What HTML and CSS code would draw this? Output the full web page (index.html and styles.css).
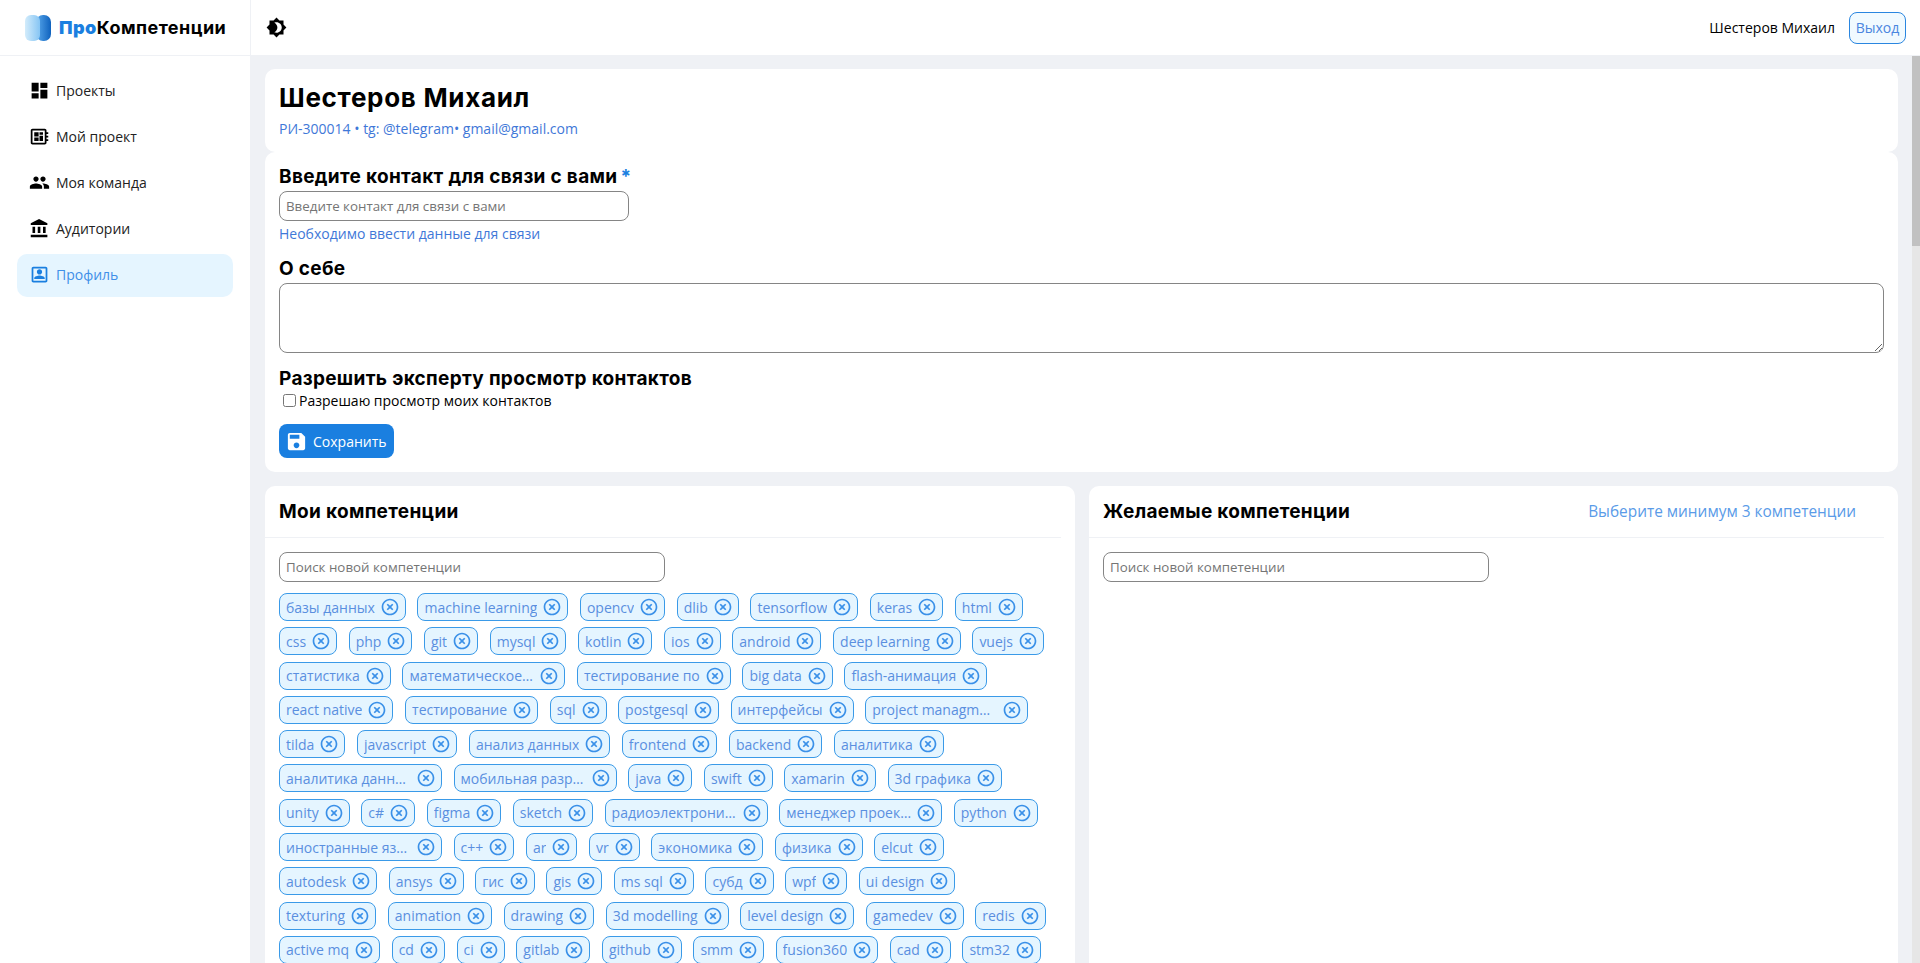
FILE: index.html
```html
<!DOCTYPE html>
<html lang="ru">
<head>
  <meta charset="UTF-8">
  <title>ПроКомпетенции</title>
  <link rel="stylesheet" href="styles.css">
</head>
<body>
  <svg class="sprite" width="0" height="0">
    <symbol id="i-off" viewBox="0 0 24 24"><path d="M14.59 8L12 10.59 9.41 8 8 9.41 10.59 12 8 14.59 9.41 16 12 13.41 14.59 16 16 14.59 13.41 12 16 9.41 14.59 8zM12 2C6.47 2 2 6.47 2 12s4.47 10 10 10 10-4.47 10-10S17.53 2 12 2zm0 18c-4.41 0-8-3.59-8-8s3.59-8 8-8 8 3.59 8 8-3.59 8-8 8z"/></symbol>
  </svg>

  <header class="topbar">
    <div class="brand">
      <svg class="brand-logo" viewBox="0 0 26 26">
        <defs>
          <linearGradient id="lg-a" x1="0" x2="1" y1="0" y2="0"><stop offset="0" stop-color="#d3ecfb"/><stop offset="1" stop-color="#86c5f4"/></linearGradient>
          <linearGradient id="lg-b" x1="0" x2="1" y1="0" y2="0"><stop offset="0" stop-color="#5aa9ec"/><stop offset="1" stop-color="#0f62be"/></linearGradient>
        </defs>
        <rect x="11" y="0" width="15" height="26" rx="7" fill="url(#lg-b)"/>
        <rect x="0" y="0" width="15" height="26" rx="6" fill="url(#lg-a)"/>
      </svg>
      <span class="brand-name"><b>Про</b>Компетенции</span>
    </div>
    <div class="topbar-main">
      <svg class="theme-icon" viewBox="0 0 24 24"><path d="M20 8.69V4h-4.69L12 .69 8.69 4H4v4.69L.69 12 4 15.31V20h4.69L12 23.31 15.31 20H20v-4.69L23.31 12 20 8.69zM12 18c-.89 0-1.74-.2-2.5-.55C11.56 16.5 13 14.42 13 12s-1.44-4.5-3.5-5.45C10.26 6.2 11.11 6 12 6c3.31 0 6 2.69 6 6s-2.69 6-6 6z"/></svg>
      <div class="user">
        <span>Шестеров Михаил</span>
        <button class="logout">Выход</button>
      </div>
    </div>
  </header>

  <div class="layout">
    <nav class="sidebar">
      <a class="nav-item"><svg viewBox="0 0 24 24"><path d="M3 13h8V3H3v10zm0 8h8v-6H3v6zm10 0h8V11h-8v10zm0-18v6h8V3h-8z"/></svg>Проекты</a>
      <a class="nav-item"><svg viewBox="0 0 24 24"><path d="M22 9V7h-2V5c0-1.1-.9-2-2-2H4c-1.1 0-2 .9-2 2v14c0 1.1.9 2 2 2h14c1.1 0 2-.9 2-2v-2h2v-2h-2v-2h2v-2h-2V9h2zm-4 10H4V5h14v14zM6 13h5v4H6zm6-6h4v3h-4zM6 7h5v5H6zm6 4h4v6h-4z"/></svg>Мой проект</a>
      <a class="nav-item"><svg viewBox="0 0 24 24"><path d="M16 11c1.66 0 2.99-1.34 2.99-3S17.66 5 16 5c-1.66 0-3 1.34-3 3s1.34 3 3 3zm-8 0c1.66 0 2.99-1.34 2.99-3S9.66 5 8 5C6.34 5 5 6.34 5 8s1.34 3 3 3zm0 2c-2.33 0-7 1.17-7 3.5V19h14v-2.5c0-2.33-4.67-3.5-7-3.5zm8 0c-.29 0-.62.02-.97.05 1.16.84 1.97 1.97 1.97 3.45V19h6v-2.5c0-2.33-4.67-3.5-7-3.5z"/></svg>Моя команда</a>
      <a class="nav-item"><svg viewBox="0 0 24 24"><path d="M4 10v7h3v-7H4zm6 0v7h3v-7h-3zM2 22h19v-3H2v3zm14-12v7h3v-7h-3zm-4.5-9L2 6v2h19V6l-9.5-5z"/></svg>Аудитории</a>
      <a class="nav-item active"><svg viewBox="0 0 24 24"><path d="M3 5v14c0 1.1.89 2 2 2h14c1.1 0 2-.9 2-2V5c0-1.1-.9-2-2-2H5c-1.11 0-2 .9-2 2zm16 14H5V5h14v14zM12 12c1.65 0 3-1.35 3-3s-1.35-3-3-3-3 1.35-3 3 1.35 3 3 3zM6 17h12v-.75c0-2-4-3.1-6-3.1s-6 1.1-6 3.1V17z"/></svg>Профиль</a>
    </nav>

    <main class="content">
      <section class="card card-head">
        <h1>Шестеров Михаил</h1>
        <p class="meta">РИ-300014 • tg: @telegram• gmail@gmail.com</p>
      </section>

      <section class="card card-form">
        <label class="field-title">Введите контакт для связи с вами<span class="req">*</span></label>
        <input class="input input-contact" type="text" placeholder="Введите контакт для связи с вами">
        <p class="hint">Необходимо ввести данные для связи</p>
        <label class="field-title about-title">О себе</label>
        <textarea class="input about"></textarea>
        <label class="field-title allow-title">Разрешить эксперту просмотр контактов</label>
        <label class="check"><input type="checkbox">Разрешаю просмотр моих контактов</label>
        <button class="save">
          <svg viewBox="0 0 24 24"><path d="M17 3H5c-1.11 0-2 .9-2 2v14c0 1.1.89 2 2 2h14c1.1 0 2-.9 2-2V7l-4-4zm-5 16c-1.66 0-3-1.34-3-3s1.34-3 3-3 3 1.34 3 3-1.34 3-3 3zm3-10H5V5h10v4z"/></svg>
          Сохранить
        </button>
      </section>

      <div class="skills">
        <section class="card skill-card">
          <div class="skill-head"><h2>Мои компетенции</h2></div>
          <input class="input input-search" type="text" placeholder="Поиск новой компетенции">
          <div class="chips" id="chips"></div>
        </section>
        <section class="card skill-card">
          <div class="skill-head">
            <h2>Желаемые компетенции</h2>
            <span class="skill-note">Выберите минимум 3 компетенции</span>
          </div>
          <input class="input input-search" type="text" placeholder="Поиск новой компетенции">
        </section>
      </div>
    </main>

    <div class="scrollbar"><div class="scrollbar-thumb"></div></div>
  </div>

  <script src="chips.js"></script>
</body>
</html>
```

FILE: styles.css
```css
* { box-sizing: border-box; }

html, body { height: 100%; }

body {
  margin: 0;
  display: flex;
  flex-direction: column;
  overflow: hidden;
  font-family: "Open Sans", "Noto Sans", sans-serif;
  font-size: 14px;
  color: #000;
  background: #fff;
}

.sprite { position: absolute; }

/* top bar */
.topbar {
  flex: none;
  display: flex;
  height: 56px;
  border-bottom: 1px solid #eff1f5;
}
.brand {
  flex: none;
  width: 251px;
  display: flex;
  align-items: center;
  gap: 8px;
  padding-left: 25px;
  border-right: 1px solid #eff1f5;
}
.brand-logo { width: 26px; height: 26px; }
.brand-name {
  font-family: Inter, "Noto Sans", sans-serif;
  font-size: 18px;
  font-weight: 700;
  letter-spacing: .45px;
}
.brand-name b { color: #1a7fe0; }
.topbar-main {
  flex: 1;
  display: flex;
  align-items: center;
  justify-content: space-between;
  padding: 0 14px 0 15px;
}
.theme-icon { width: 21px; height: 21px; }
.user { display: flex; align-items: center; gap: 14px; }
.logout {
  width: 57px;
  height: 32px;
  padding: 0;
  font: inherit;
  color: #4a86e0;
  background: #f1faff;
  border: 1px solid #2a86e0;
  border-radius: 8px;
}

/* page body */
.layout { flex: 1; display: flex; min-height: 0; }
.sidebar {
  flex: none;
  width: 251px;
  display: flex;
  flex-direction: column;
  gap: 1px;
  padding: 12px 17px 0;
  border-right: 1px solid #eff1f5;
}
.nav-item {
  display: flex;
  align-items: center;
  gap: 6px;
  height: 45px;
  padding-left: 12px;
  color: #222;
  border-radius: 10px;
}
.nav-item svg { flex: none; width: 21px; height: 21px; }
.nav-item.active {
  height: 43px;
  margin-top: 2px;
  padding-bottom: 2px;
  color: #3f8fe8;
  fill: #1a7fe0;
  background: #e5f5ff;
}

.content {
  flex: 1;
  overflow: hidden;
  padding: 13px 14px 14px 14px;
  background: #eff1f5;
}
.scrollbar {
  flex: none;
  width: 8px;
  background: #e6e6e6;
}
.scrollbar-thumb { height: 190px; background: #c1c1c1; }

.card { background: #fff; border-radius: 10px; }
.card-head { height: 83px; padding: 13px 14px 0; }
h1 {
  margin: 0;
  font-family: Inter, "Noto Sans", sans-serif;
  font-size: 26px;
  font-weight: 700;
  line-height: 32px;
  letter-spacing: .7px;
}
.meta { margin: 5px 0 0; color: #3f78d8; line-height: 19px; }

.card-form {
  display: flex;
  flex-direction: column;
  align-items: flex-start;
  height: 320px;
  padding: 14px 14px 0;
}
.field-title {
  font-family: Inter, "Noto Sans", sans-serif;
  font-size: 19px;
  font-weight: 700;
  line-height: 22px;
  letter-spacing: .32px;
}
.req { margin-left: 3px; color: #1a7fe0; }
.input {
  font-family: inherit;
  font-size: 13.333px;
  padding: 0 6px;
  background: #fff;
  border: 1px solid #858585;
  border-radius: 8px;
  outline: none;
}
.input::placeholder { color: #757575; }
.input-contact { width: 350px; height: 30px; margin-top: 3px; }
.hint { margin: 3px 0 0; color: #3f78d8; line-height: 19px; }
.about-title { margin-top: 15px; }
.about { display: block; width: 100%; height: 70px; margin-top: 3px; }
.allow-title { margin-top: 15px; }
.check { display: flex; align-items: center; margin-top: 1px; line-height: 19px; }
.check input { width: 13px; height: 13px; margin: 0 3px 0 4px; }
.save {
  display: flex;
  align-items: center;
  gap: 5px;
  height: 34px;
  margin-top: 14px;
  padding: 0 7px 0 6px;
  font: inherit;
  color: #fff;
  fill: #fff;
  background: #1a7fe0;
  border: 0;
  border-radius: 8px;
}
.save svg { width: 23px; height: 23px; }

/* the list goes on far below the fold */
.skills {
  display: grid;
  grid-template-columns: 810px 1fr;
  gap: 14px;
  margin-top: 14px;
  min-height: 600px;
}
.skill-card { padding: 0 14px; }
.skill-head {
  display: flex;
  align-items: center;
  justify-content: space-between;
  height: 52px;
  margin: 0 0 14px -14px;
  padding: 0 28px 0 14px;
  border-bottom: 1px solid #eff1f5;
}
h2 {
  margin: 0;
  font-family: Inter, "Noto Sans", sans-serif;
  font-size: 19px;
  font-weight: 700;
  letter-spacing: .32px;
}
.skill-note { font-size: 15.4px; color: #5a9be8; }
.input-search { display: block; width: 386px; height: 30px; }

.chips {
  display: flex;
  flex-wrap: wrap;
  gap: 6.3px 11.6px;
  width: 773px;
  margin-top: 11px;
}
.chip {
  display: flex;
  align-items: center;
  gap: 5px;
  height: 28px;
  padding: 0 5px 0 6px;
  color: #5a8fe0;
  fill: #3a90e8;
  background: #e5f5ff;
  border: 1px solid #3a9ae8;
  border-radius: 8px;
}
.chip-text {
  max-width: 125px;
  overflow: hidden;
  white-space: nowrap;
  text-overflow: ellipsis;
}
.chip svg { flex: none; width: 20px; height: 20px; }
```

FILE: chips.js
```js
var skills = ['базы данных','machine learning','opencv','dlib','tensorflow','keras','html',
  'css','php','git','mysql','kotlin','ios','android','deep learning','vuejs',
  'статистика','математическое моделирование','тестирование по','big data','flash-анимация',
  'react native','тестирование','sql','postgesql','интерфейсы','project managment',
  'tilda','javascript','анализ данных','frontend','backend','аналитика',
  'аналитика данных','мобильная разработка','java','swift','xamarin','3d графика',
  'unity','c#','figma','sketch','радиоэлектроника','менеджер проектов','python',
  'иностранные языки','c++','ar','vr','экономика','физика','elcut',
  'autodesk','ansys','гис','gis','ms sql','субд','wpf','ui design',
  'texturing','animation','drawing','3d modelling','level design','gamedev','redis',
  'active mq','cd','ci','gitlab','github','smm','fusion360','cad','stm32'];

var box = document.getElementById('chips');
skills.forEach(function (name) {
  var chip = document.createElement('span');
  chip.className = 'chip';
  chip.innerHTML = '<span class="chip-text">' + name + '</span>' +
    '<svg><use href="#i-off"/></svg>';
  box.appendChild(chip);
});
```
